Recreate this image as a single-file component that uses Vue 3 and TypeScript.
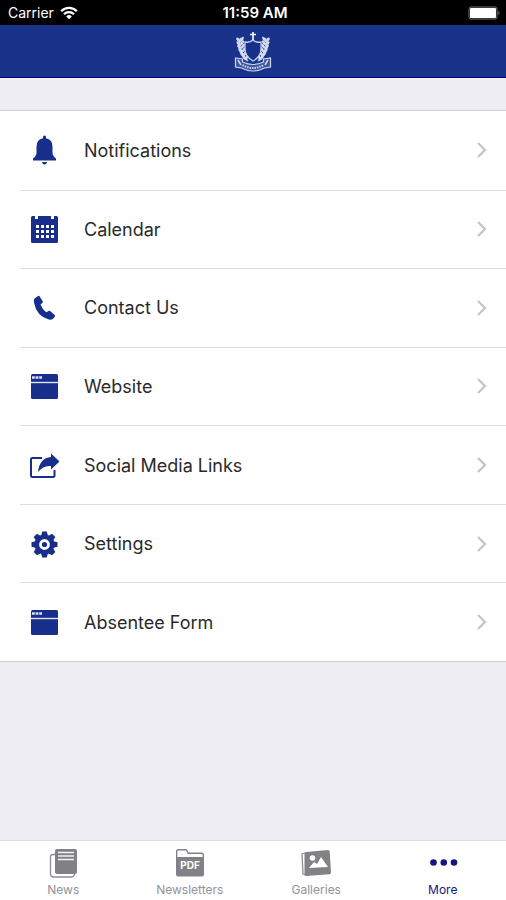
<script setup lang="ts">
type IconName = 'bell' | 'calendar' | 'phone' | 'window' | 'share' | 'gear'
type TabIcon = 'news' | 'pdf' | 'gallery' | 'more'

interface MenuItem {
  label: string
  icon: IconName
}

interface Tab {
  label: string
  icon: TabIcon
  active: boolean
}

const items: MenuItem[] = [
  { label: 'Notifications', icon: 'bell' },
  { label: 'Calendar', icon: 'calendar' },
  { label: 'Contact Us', icon: 'phone' },
  { label: 'Website', icon: 'window' },
  { label: 'Social Media Links', icon: 'share' },
  { label: 'Settings', icon: 'gear' },
  { label: 'Absentee Form', icon: 'window' },
]

const tabs: Tab[] = [
  { label: 'News', icon: 'news', active: false },
  { label: 'Newsletters', icon: 'pdf', active: false },
  { label: 'Galleries', icon: 'gallery', active: false },
  { label: 'More', icon: 'more', active: true },
]

const dotColumns = [8, 13, 18, 23]
const dotRows = [11, 16, 21]
const gearTeeth = [0, 45, 90, 135]
const leaves = [0, 1, 2, 3, 4, 5]
</script>

<template>
  <div class="screen">
    <div class="status">
      <span class="carrier">
        Carrier
        <svg class="wifi" viewBox="0 0 18 14" aria-hidden="true">
          <path d="M1.200 5.200a11 11 0 0 1 15.600 0M4 8.200a7 7 0 0 1 10 0" fill="none" stroke="#fff" stroke-width="2.200" />
          <path d="M6.200 10.400a4 4 0 0 1 5.600 0L9 13.200z" fill="#fff" />
        </svg>
      </span>
      <span class="time">11:59 AM</span>
      <svg class="battery" viewBox="0 0 34 14" aria-hidden="true">
        <rect x="1" y="1" width="28" height="12" rx="2" fill="#000" stroke="#777" />
        <rect x="2" y="2" width="26" height="10" rx="1" fill="#fff" />
        <path d="M30.500 5a2.500 2.500 0 0 1 0 4z" fill="#888" />
      </svg>
    </div>

    <header class="header">
      <svg class="crest" viewBox="0 0 38 42" aria-hidden="true">
        <path d="M7 7Q1 20 14 30M31 7q6 13-7 23" fill="none" stroke="#aab5dc" stroke-width="2" />
        <g fill="#d3daf0">
          <template v-for="n in leaves" :key="n">
            <ellipse :cx="4.5 + n * n * 0.25" :cy="9 + n * 3.6" rx="3" ry="1.500" :transform="`rotate(45 ${4.5 + n * n * 0.25} ${9 + n * 3.6})`" />
            <ellipse :cx="8 + n * n * 0.2" :cy="8 + n * 3.6" rx="2.600" ry="1.400" :transform="`rotate(-55 ${8 + n * n * 0.2} ${8 + n * 3.6})`" />
            <ellipse :cx="33.5 - n * n * 0.25" :cy="9 + n * 3.6" rx="3" ry="1.500" :transform="`rotate(-45 ${33.5 - n * n * 0.25} ${9 + n * 3.6})`" />
            <ellipse :cx="30 - n * n * 0.2" :cy="8 + n * 3.6" rx="2.600" ry="1.400" :transform="`rotate(55 ${30 - n * n * 0.2} ${8 + n * 3.6})`" />
          </template>
        </g>
        <path d="M11 11q5 1 8-2q3 3 8 2v7q0 7.500-8 12q-8-4.500-8-12z" fill="#17308a" stroke="#c9d1ec" stroke-width="1.300" />
        <path d="M19 1v8M16 3.500h6" fill="none" stroke="#fff" stroke-width="1.600" />
        <path d="M1.500 27l7 1v3q10.500 5 21 0v-3l7-1v9l-6 1q-11.500 6-23 0l-6-1z" fill="#3f549f" stroke="#cfd6ee" stroke-width="1.200" />
        <path d="M8.500 34q10.500 6 21 0" fill="none" stroke="#cfd6ee" stroke-width="2" stroke-dasharray="1.500 1" />
        <path d="M4 29l3 5M34 29l-3 5" stroke="#cfd6ee" stroke-width="1.500" />
      </svg>
    </header>

    <main class="content">
      <ul class="menu">
        <li v-for="item in items" :key="item.label" class="menu-item">
          <a class="menu-link" href="#">
            <svg class="menu-icon" viewBox="0 0 30 30" aria-hidden="true">
              <g v-if="item.icon === 'bell'">
                <path d="M14 3.200V1.500q1.500-2 3 0v1.700q6.500 1.300 6.500 8.300v6q0 3.500 3.500 6v2H4v-2q3.500-2.500 3.500-6v-6q0-7 6.500-8.300z" />
                <path d="M13 27h5q-.5 2.500-2.500 2.500T13 27z" />
              </g>
              <g v-else-if="item.icon === 'calendar'">
                <path d="M3.500 2H6v3h3V2h13v3h3V2h2.500Q29 2 29 3.500v24q0 1.500-1.500 1.500h-24Q2 29 2 27.500v-24Q2 2 3.500 2z" />
                <g fill="#fff">
                  <template v-for="y in dotRows" :key="y">
                    <rect v-for="x in dotColumns" :key="x" :x="x - 1" :y="y" width="3" height="3" />
                  </template>
                </g>
              </g>
              <path v-else-if="item.icon === 'phone'" d="M5.500 5.500L9 3q1-.5 1.700.5l3 4.800q.6 1-.4 1.800l-1.800 1.500q1.700 4.800 5.700 7.600l2.400-1.200q1-.5 1.800.3l4.300 3.700q.8.800.1 1.700l-2 2.300q-1.300 1-4 .5Q7.500 23 5 9.500q-.5-3 .5-4z" />
              <g v-else-if="item.icon === 'window'">
                <rect x="2" y="3" width="27" height="25" rx="1.500" />
                <path d="M2 11.500h27" stroke="#dfe3f4" stroke-width="1.400" />
                <path d="M3 6.500h10.500" stroke="#dfe3f4" stroke-width="2.600" stroke-dasharray="2.800 .8" />
              </g>
              <g v-else-if="item.icon === 'share'">
                <path d="M13 8H3.500Q2 8 2 9.500v16Q2 27 3.500 27H24q1.500 0 1.500-1.500V20" fill="none" stroke="#172f8a" stroke-width="2" />
                <path d="M22 3.500l8.500 8-8.500 8V16q-7.500-1-13 6 1.500-14 13-15z" />
              </g>
              <g v-else>
                <path
                  v-for="angle in gearTeeth"
                  :key="angle"
                  d="M13.200 2.500h4.600l1 4v18l-1 4h-4.600l-1-4v-18z"
                  :transform="`rotate(${angle} 15.500 15.500)`"
                />
                <circle cx="15.500" cy="15.500" r="10" />
                <circle cx="15.500" cy="15.500" r="4" fill="#172f8a" stroke="#fff" stroke-width="2.800" />
              </g>
            </svg>
            <span class="menu-label">{{ item.label }}</span>
            <svg class="chevron" viewBox="0 0 12 18" aria-hidden="true">
              <path d="M2 2l7 7-7 7" fill="none" stroke="#c4c4c8" stroke-width="2.200" />
            </svg>
          </a>
        </li>
      </ul>
    </main>

    <nav class="tabs">
      <a v-for="tab in tabs" :key="tab.label" class="tab" :class="{ active: tab.active }" href="#">
        <svg class="tab-icon" viewBox="0 0 32 32" aria-hidden="true">
          <g v-if="tab.icon === 'news'">
            <path d="M8 7.500H6Q3.500 7.500 3.500 10v17q0 3 3 3h18q2.500 0 3-3" fill="none" stroke="#8e8e93" stroke-width="1.300" />
            <rect x="8" y="2" width="22" height="25" rx="2" fill="#828286" />
            <path d="M11 5.500h16M11 9h16M11 12.500h16" stroke="#f2f2f4" stroke-width="1.500" />
          </g>
          <g v-else-if="tab.icon === 'pdf'">
            <path d="M2.700 11V4.200q0-1.500 1.500-1.500h7.300q1 0 1.500 1l1.200 2.500h13.600q1.500 0 1.500 1.500V11" fill="#fff" stroke="#828286" stroke-width="1.400" />
            <path d="M2 10h28v17.500q0 2-2 2H4q-2 0-2-2z" fill="#828286" />
            <text class="pdf-text" x="16" y="22" text-anchor="middle">PDF</text>
          </g>
          <g v-else-if="tab.icon === 'gallery'">
            <path d="M5 6L2 7l1 20 3 1" fill="none" stroke="#8e8e93" stroke-width="1.300" />
            <path d="M6 5l22-2q1.500 0 1.700 1.500l1.300 21q0 1.500-1.500 1.700L6 29q-1.500 0-1.500-1.500L4.500 6.500Q4.500 5 6 5z" fill="#828286" />
            <circle cx="12.500" cy="11" r="2.800" fill="#fff" />
            <path d="M9 21l5-6 3 2 4-7 7 10z" fill="#fff" />
          </g>
          <g v-else fill="#17167c">
            <circle cx="6.500" cy="15.500" r="3.300" />
            <circle cx="16.800" cy="15.500" r="3.300" />
            <circle cx="27" cy="15.500" r="3.300" />
          </g>
        </svg>
        <span>{{ tab.label }}</span>
      </a>
    </nav>
  </div>
</template>

<style>
body {
  margin: 0;
}
</style>

<style scoped>
.screen {
  display: flex;
  flex-direction: column;
  min-height: 100vh;
  background: #eeedf3;
  font-family: Inter, "Liberation Sans", sans-serif;
}

.status {
  display: grid;
  grid-template-columns: 1fr auto 1fr;
  align-items: center;
  box-sizing: border-box;
  height: 25px;
  padding: 0 4px 0 8px;
  background: #000;
  color: #fff;
  font-size: 14px;
  line-height: 24px;
}

.carrier {
  display: flex;
  align-items: center;
  gap: 6px;
}

.wifi {
  width: 18px;
  height: 14px;
}

.time {
  font-size: 15px;
  font-weight: 600;
}

.battery {
  justify-self: end;
  width: 34px;
  height: 14px;
}

.header {
  display: flex;
  align-items: center;
  justify-content: center;
  box-sizing: border-box;
  height: 53px;
  padding-top: 2px;
  border-bottom: 1px solid #00007c;
  background: #183389;
}

.crest {
  width: 38px;
  height: 42px;
}

.content {
  flex: 1;
  padding: 32px 0;
}

.menu {
  display: grid;
  grid-auto-rows: 1fr;
  box-sizing: border-box;
  min-height: 552px;
  margin: 0;
  padding: 0 0 0 20px;
  border-top: 1px solid #cfced3;
  border-bottom: 1px solid #cfced3;
  background: #fff;
  list-style: none;
}

.menu-item + .menu-item {
  border-top: 1px solid #dcdcde;
}

.menu-link {
  display: flex;
  align-items: center;
  height: 100%;
  padding: 0 18px 0 9px;
  color: #2a2a2c;
  text-decoration: none;
}

.menu-icon {
  width: 30px;
  height: 30px;
  margin-right: 25px;
  fill: #172f8a;
}

.menu-label {
  flex: 1;
  padding-top: 1px;
  font-size: 18px;
  line-height: 24px;
}

.chevron {
  width: 12px;
  height: 18px;
}

.tabs {
  display: grid;
  grid-template-columns: repeat(4, 1fr);
  box-sizing: border-box;
  height: 60px;
  border-top: 1px solid #dddce2;
  background: #fff;
}

.tab {
  display: flex;
  flex-direction: column;
  align-items: center;
  padding-top: 6px;
  color: #929297;
  font-size: 12px;
  line-height: 14px;
  text-decoration: none;
}

.tab.active {
  color: #17167c;
}

.tab-icon {
  width: 32px;
  height: 32px;
  margin-bottom: 4px;
}

.pdf-text {
  fill: #fff;
  font-size: 10px;
  font-weight: 700;
}
</style>
